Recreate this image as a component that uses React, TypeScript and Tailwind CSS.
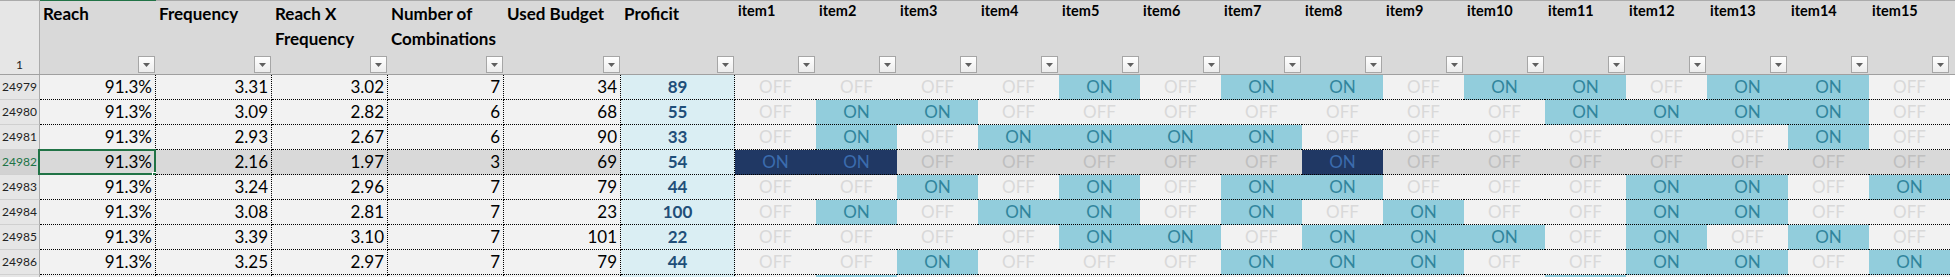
import React from 'react';

type Row = {
  n: number;
  reach: string;
  freq: string;
  rxf: string;
  combos: number;
  budget: number;
  proficit: number;
  items: string;
};

const rows: Row[] = [
  { n: 24979, reach: '91.3%', freq: '3.31', rxf: '3.02', combos: 7, budget: 34, proficit: 89, items: '000010110110110' },
  { n: 24980, reach: '91.3%', freq: '3.09', rxf: '2.82', combos: 6, budget: 68, proficit: 55, items: '011000000011110' },
  { n: 24981, reach: '91.3%', freq: '2.93', rxf: '2.67', combos: 6, budget: 90, proficit: 33, items: '010111100000010' },
  { n: 24982, reach: '91.3%', freq: '2.16', rxf: '1.97', combos: 3, budget: 69, proficit: 54, items: '110000010000000' },
  { n: 24983, reach: '91.3%', freq: '3.24', rxf: '2.96', combos: 7, budget: 79, proficit: 44, items: '001010110001101' },
  { n: 24984, reach: '91.3%', freq: '3.08', rxf: '2.81', combos: 7, budget: 23, proficit: 100, items: '010110101001100' },
  { n: 24985, reach: '91.3%', freq: '3.39', rxf: '3.10', combos: 7, budget: 101, proficit: 22, items: '000011011101010' },
  { n: 24986, reach: '91.3%', freq: '3.25', rxf: '2.97', combos: 7, budget: 79, proficit: 44, items: '001000111001101' },
];

// next row peeks in below the window, only its fills show
const peekItems = '010000000010000';

const SELECTED = 24982;

const itemNames = Array.from({ length: 15 }, (_, i) => `item${i + 1}`);

function FilterButton() {
  return (
    <div className="mt-auto flex h-[17px] w-[17px] shrink-0 items-center justify-center self-end border border-[#a6a6a6] bg-gradient-to-b from-[#ffffff] to-[#ececec]">
      <svg width="7" height="4" viewBox="0 0 7 4">
        <polygon points="0,0 7,0 3.5,4" fill="#5f5f5f" />
      </svg>
    </div>
  );
}

function HeadCell({ width, lines }: { width: string; lines: string[] }) {
  return (
    <div className={`${width} flex shrink-0 flex-col bg-[#d9d9d9] pr-[1px] pb-[1px] pl-[3px]`}>
      <div className="text-[17px] leading-[25px] font-bold text-black">
        {lines.map((l, i) => (
          <div key={i} className="whitespace-nowrap">
            {l}
          </div>
        ))}
      </div>
      <FilterButton />
    </div>
  );
}

function ItemHead({ label }: { label: string }) {
  return (
    <div className="flex w-[81px] shrink-0 flex-col bg-[#d9d9d9] pr-[1px] pb-[1px] pl-[3px]">
      <div className="text-[14.5px] leading-[20px] font-bold text-black">{label}</div>
      <FilterButton />
    </div>
  );
}

function NumCell({ width, value, sel, active }: { width: string; value: string | number; sel: boolean; active?: boolean }) {
  return (
    <div
      className={`${width} relative shrink-0 border-r border-b border-dotted border-black pr-[3px] text-right text-[17px] leading-[24px] text-black ${
        sel ? 'bg-[#d9d9d9]' : 'bg-[#f2f2f2]'
      }`}
    >
      {value}
      {active ? (
        <>
          <div className="pointer-events-none absolute -top-[1px] -right-[1px] -bottom-[1px] -left-[2px] border-2 border-[#217346]" />
          <div className="absolute -right-[2px] -bottom-[3px] h-[5px] w-[5px] border border-white bg-[#217346]" />
        </>
      ) : null}
    </div>
  );
}

function ItemCell({ on, sel }: { on: boolean; sel: boolean }) {
  let cls = 'bg-[#f2f2f2] text-[#d9d9d9]';
  if (sel) cls = on ? 'bg-[#203864] text-[#3b6cae]' : 'bg-[#d9d9d9] text-[#bfbfbf]';
  else if (on) cls = 'bg-[#92cddc] text-[#31859c]';
  return (
    <div className={`w-[81px] shrink-0 border-b border-dotted border-black text-center text-[17px] leading-[24px] ${cls}`}>
      {on ? 'ON' : 'OFF'}
    </div>
  );
}

export default function App() {
  return (
    <div className="h-[277px] w-[1955px] overflow-hidden bg-white font-['Lato','Liberation_Sans',sans-serif]">
      <div className="flex h-[1px]">
        <div className="w-[40px] bg-[#ababab]" />
        <div className="w-[116px] bg-[#217346]" />
        <div className="flex-1 bg-[#ababab]" />
      </div>

      <div className="flex h-[74px] border-b border-[#a0a0a0]">
        <div className="flex w-[40px] shrink-0 items-end justify-center border-r border-[#ababab] bg-[#e6e6e6] pb-[1px] text-[12px] leading-[16px] text-[#222]">
          1
        </div>
        <HeadCell width="w-[116px]" lines={['Reach']} />
        <HeadCell width="w-[116px]" lines={['Frequency']} />
        <HeadCell width="w-[116px]" lines={['Reach X', 'Frequency']} />
        <HeadCell width="w-[116px]" lines={['Number of', 'Combinations']} />
        <HeadCell width="w-[117px]" lines={['Used Budget']} />
        <HeadCell width="w-[114px]" lines={['Proficit']} />
        {itemNames.map((name) => (
          <ItemHead key={name} label={name} />
        ))}
        <div className="flex-1 bg-[#d9d9d9]" />
      </div>

      {rows.map((r) => {
        const sel = r.n === SELECTED;
        return (
          <div key={r.n} className="flex h-[25px]">
            <div
              className={`flex w-[40px] shrink-0 items-center justify-center border-r border-b border-r-[#ababab] border-b-[#d0d0d0] text-[12px] leading-[24px] ${
                sel ? 'bg-[#d2d2d2] text-[#217346]' : 'bg-[#e6e6e6] text-[#222]'
              }`}
            >
              {r.n}
            </div>
            <NumCell width="w-[116px]" value={r.reach} sel={sel} active={sel} />
            <NumCell width="w-[116px]" value={r.freq} sel={sel} />
            <NumCell width="w-[116px]" value={r.rxf} sel={sel} />
            <NumCell width="w-[116px]" value={r.combos} sel={sel} />
            <NumCell width="w-[117px]" value={r.budget} sel={sel} />
            <div className="w-[114px] shrink-0 border-r border-b border-dotted border-black bg-[#daeef3] text-center text-[17px] leading-[24px] font-bold text-[#1f4e79]">
              {r.proficit}
            </div>
            {r.items.split('').map((c, i) => (
              <ItemCell key={i} on={c === '1'} sel={sel} />
            ))}
            <div className="flex-1 bg-white" />
          </div>
        );
      })}

      <div className="flex h-[25px]">
        <div className="w-[40px] shrink-0 border-r border-[#ababab] bg-[#e6e6e6]" />
        <div className="w-[116px] shrink-0 border-r border-dotted border-black bg-[#f2f2f2]" />
        <div className="w-[116px] shrink-0 border-r border-dotted border-black bg-[#f2f2f2]" />
        <div className="w-[116px] shrink-0 border-r border-dotted border-black bg-[#f2f2f2]" />
        <div className="w-[116px] shrink-0 border-r border-dotted border-black bg-[#f2f2f2]" />
        <div className="w-[117px] shrink-0 border-r border-dotted border-black bg-[#f2f2f2]" />
        <div className="w-[114px] shrink-0 border-r border-dotted border-black bg-[#daeef3]" />
        {peekItems.split('').map((c, i) => (
          <div key={i} className={`w-[81px] shrink-0 ${c === '1' ? 'bg-[#92cddc]' : 'bg-[#f2f2f2]'}`} />
        ))}
        <div className="flex-1 bg-white" />
      </div>
    </div>
  );
}
